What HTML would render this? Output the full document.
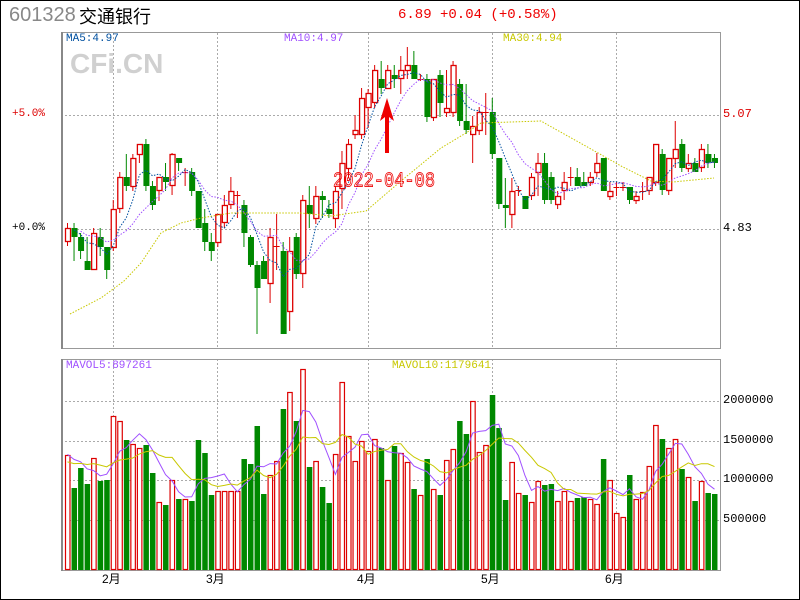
<!DOCTYPE html>
<html><head><meta charset="utf-8"><style>
html,body{margin:0;padding:0;background:#fff;}
#w{position:relative;width:798px;height:598px;border:1px solid #000;overflow:hidden;font-family:"Liberation Mono",monospace;}
.t{position:absolute;white-space:nowrap;}
</style></head><body><div id="w">
<div class="t" style="left:8px;top:3px;font:20px 'Liberation Sans',sans-serif;color:#888;">601328</div>
<div class="t" style="left:78px;top:3px;font:18px 'Noto Sans CJK SC',sans-serif;color:#000;line-height:24px;">交通银行</div>
<div class="t" style="left:397px;top:6px;font:14px 'Liberation Mono',monospace;color:#e00;">6.89 +0.04 (+0.58%)</div>
<svg id="s" width="798" height="598" style="position:absolute;left:0;top:0" xmlns="http://www.w3.org/2000/svg"></svg>
</div>
<script>
var C=[['r',227,240,222,245],['g',227,236,222,260],['g',236,250,232,258],['g',260,269,236,269],['r',232,268,227,268],['g',236,246,227,255],['g',246,269,246,278],['r',208,246,199,250],['r',176,207,171,212],['g',176,185,153,190],
['r',157,185,153,190],['r',143,153,143,162],['g',143,185,138,190],['g',185,204,180,209],['r',176,189,176,200],['g',176,181,162,190],['r',153,184,152,194],['g',157,162,157,170],['r',171,172,167,185],['g',171,190,167,195],
['g',190,227,190,227],['g',222,241,208,250],['g',241,250,232,260],['r',213,241,213,246],['r',204,221,194,227],['r',190,203,176,208],['r',194,195,190,217],['g',204,232,199,246],['g',236,264,234,266],['g',264,287,260,333],
['g',260,278,255,278],['r',236,282,227,302],['r',245,246,213,269],['g',250,333,241,333],['r',250,310,236,330],['g',236,273,232,278],['r',199,272,194,287],['g',204,213,185,227],['r',195,217,185,223],['g',195,199,190,217],
['g',208,213,199,217],['r',190,217,185,227],['r',162,187,150,208],['r',143,167,138,177],['r',129,133,114,138],['r',97,133,87,138],['r',92,106,88,127],['r',69,101,64,107],['g',78,87,60,93],['r',69,87,64,87],
['g',74,78,64,87],['r',69,77,55,93],['r',64,69,46,78],['g',64,78,50,78],['r',78,79,73,80],['g',78,116,73,121],['r',78,116,78,120],['g',74,102,69,116],['r',107,111,69,116],['r',64,111,60,116],
['g',83,120,78,125],['g',120,129,83,133],['r',125,133,115,162],['r',111,129,106,134],['r',111,112,92,134],['g',111,153,97,158],['g',157,203,157,208],['g',204,207,177,227],['r',190,213,177,227],['r',189,190,185,195],
['g',195,208,195,208],['r',176,194,172,199],['r',162,171,152,195],['g',162,199,152,203],['g',176,199,171,203],['r',195,203,190,208],['r',181,189,171,199],['r',176,177,166,185],['g',176,185,167,185],['g',181,185,171,185],
['r',176,181,171,185],['r',162,171,152,176],['g',157,190,157,190],['r',190,195,181,199],['r',186,187,181,195],['r',186,187,181,190],['g',186,199,186,203],['r',195,199,190,203],['r',190,191,181,199],['r',176,189,176,194],
['r',143,181,143,185],['g',153,189,148,194],['r',157,189,157,194],['r',148,157,120,167],['g',143,167,138,171],['r',162,167,153,171],['g',162,171,157,171],['r',148,166,143,171],['g',153,162,143,167],['g',157,162,153,167]];
var V=[['r',454],['g',487],['g',467],['g',483],['r',457],['g',480],['g',479],['r',415],['r',420],['g',439],['r',443],['r',447],['g',444],['g',472],['r',501],['g',504],['r',479],['g',498],['r',498],['g',500],
['g',439],['g',452],['g',494],['r',490],['r',490],['r',490],['r',490],['g',458],['g',463],['g',425],['g',493],['r',474],['r',460],['g',408],['r',391],['g',420],['r',368],['g',466],['r',460],['g',486],
['g',502],['r',453],['r',381],['r',435],['r',460],['r',440],['r',450],['r',438],['g',447],['r',479],['g',445],['r',452],
['r',461],['g',488],['r',494],['g',458],['r',488],['g',494],['r',459],['r',448],['g',420],['g',433],['r',400],['r',451],['r',444],['g',394],['g',427],['g',499],['r',461],['r',492],['g',494],['r',501],
['r',480],['g',484],['g',483],['r',500],['r',490],['r',500],['g',497],['g',496],['r',498],['r',503],['g',458],['r',479],['r',512],['r',516],['g',474],['r',498],['r',491],['r',465],['r',424],['g',438],
['r',447],['r',438],['g',468],['r',476],['g',500],['r',480],['g',492],['g',493]];
var s='',X=function(i){return 64+i*6.535;};
function L(x1,y1,x2,y2,c,d,w){return '<line x1="'+x1+'" y1="'+y1+'" x2="'+x2+'" y2="'+y2+'" stroke="'+c+'"'+(d?' stroke-dasharray="'+d+'"':'')+' stroke-width="'+(w||1)+'"/>';}
[112,216,367,491,615].forEach(function(x){s+=L(x+.5,32,x+.5,347,'#aaa','2,2');s+=L(x+.5,358,x+.5,569,'#aaa','2,2');});
s+=L(60,114.5,720,114.5,'#aaa','2,2')+L(60,228.5,720,228.5,'#aaa','2,2');
[400,440,479,519].forEach(function(y){s+=L(60,y+.5,720,y+.5,'#aaa','2,2');});
s+='<rect x="60.5" y="31.5" width="659" height="316" fill="none" stroke="#999"/>';
s+='<rect x="60.5" y="358.5" width="659" height="211" fill="none" stroke="#999"/>';
s+=L(61,31,61,348,'#888',null,2)+L(61,358,61,570,'#888',null,2);
var cl=[];
C.forEach(function(c,i){var x=X(i),cx=x+2.5,col=c[0]=='r'?'#d00':'#080';cl.push(c[0]=='r'?c[1]:c[2]);
s+=L(cx,c[3],cx,c[4],col);
if(c[2]-c[1]<=1)s+=L(x-0.5,c[1]+.5,x+5.5,c[1]+.5,col);
else if(c[0]=='r')s+='<rect x="'+(x+.5)+'" y="'+(c[1]+.5)+'" width="5" height="'+(c[2]-c[1])+'" fill="#fff" stroke="'+col+'" stroke-width="1.3"/>';
else s+='<rect x="'+x+'" y="'+c[1]+'" width="6" height="'+(c[2]-c[1])+'" fill="'+col+'"/>';});
function ma(a,n){var r=[];for(var i=0;i<a.length;i++){var t=0;for(var k=0;k<n;k++)t+=a[Math.max(0,i-k)];r.push(t/n);}return r;}
function pl(a,c,d,st){var p=a.map(function(v,i){return (X(i+st)+2.5).toFixed(1)+','+v.toFixed(1);}).join(' ');return '<polyline points="'+p+'" fill="none" stroke="'+c+'"'+(d?' stroke-dasharray="'+d+'"':'')+'/>';}
var m5=ma(cl,5),m10=ma(cl,10);
s+=pl(m5.slice(1),'#0050a0','1.5,1.5',1)+pl(m10.slice(2),'#a050ff','1.5,1.5',2);
s+='<polyline points="69,313 100,297 123,280 140,262 160,232 180,222 200,217 230,212 300,212 330,215 365,210 400,180 440,147 465,132 480,122 540,120 547,124 590,148 620,165 650,180 672,181 713,177" fill="none" stroke="#c8c800" stroke-dasharray="1.5,1.5"/>';
var vv=[];
V.forEach(function(v,i){var x=X(i),col=v[0]=='r'?'#d00':'#080';vv.push(v[1]);
if(v[0]=='r')s+='<rect x="'+(x+.5)+'" y="'+(v[1]+.5)+'" width="4.5" height="'+(568-v[1])+'" fill="#fff" stroke="'+col+'" stroke-width="1.2"/>';
else s+='<rect x="'+x+'" y="'+v[1]+'" width="5.5" height="'+(569-v[1])+'" fill="'+col+'"/>';});
var bs=[457,470,469,472,466,465,462,455,448,448];
var ext=bs.concat(vv);
s+=pl(ma(ext,5).slice(10),'#a050ff',null,0)+pl(ma(ext,10).slice(10),'#c8c800',null,0);
s+='<path d="M386,97 L379,120 L384,116 L384,152 L388,152 L388,116 L393,120 Z" fill="#e00"/>';
document.getElementById('s').innerHTML=s;
</script>
<div class="t" style="left:66px;top:33px;font:11px 'Liberation Mono',monospace;color:#0050a0;">MA5:4.97</div>
<div class="t" style="left:284px;top:33px;font:11px 'Liberation Mono',monospace;color:#a050ff;">MA10:4.97</div>
<div class="t" style="left:503px;top:33px;font:11px 'Liberation Mono',monospace;color:#c8c800;">MA30:4.94</div>
<div class="t" style="left:70px;top:48px;font:bold 28px 'Liberation Sans',sans-serif;color:#d0d0d0;">CFi.CN</div>
<div class="t" style="left:12px;top:108px;font:11px 'Liberation Mono',monospace;color:#d00;">+5.0%</div>
<div class="t" style="left:12px;top:222px;font:11px 'Liberation Mono',monospace;color:#000;">+0.0%</div>
<div class="t" style="left:723px;top:107px;font:12px 'Liberation Mono',monospace;color:#d00;">5.07</div>
<div class="t" style="left:723px;top:221px;font:12px 'Liberation Mono',monospace;color:#000;">4.83</div>
<div class="t" style="left:333px;top:170px;font:17px 'Liberation Mono',monospace;color:transparent;-webkit-text-stroke:0.7px #e00;transform:scaleY(1.25);transform-origin:0 0;">2022-04-08</div>
<div class="t" style="left:66px;top:360px;font:11px 'Liberation Mono',monospace;color:#a050ff;">MAVOL5:897261</div>
<div class="t" style="left:392px;top:360px;font:11px 'Liberation Mono',monospace;color:#c8c800;">MAVOL10:1179641</div>
<div class="t" style="left:723px;top:393px;font:12px 'Liberation Mono',monospace;">2000000</div>
<div class="t" style="left:723px;top:433px;font:12px 'Liberation Mono',monospace;">1500000</div>
<div class="t" style="left:723px;top:472px;font:12px 'Liberation Mono',monospace;">1000000</div>
<div class="t" style="left:723px;top:512px;font:12px 'Liberation Mono',monospace;">500000</div>
<div class="t" style="left:102px;top:570px;font:12px 'Liberation Sans','Noto Sans CJK SC',sans-serif;">2月</div>
<div class="t" style="left:206px;top:570px;font:12px 'Liberation Sans','Noto Sans CJK SC',sans-serif;">3月</div>
<div class="t" style="left:357px;top:570px;font:12px 'Liberation Sans','Noto Sans CJK SC',sans-serif;">4月</div>
<div class="t" style="left:481px;top:570px;font:12px 'Liberation Sans','Noto Sans CJK SC',sans-serif;">5月</div>
<div class="t" style="left:605px;top:570px;font:12px 'Liberation Sans','Noto Sans CJK SC',sans-serif;">6月</div>
</body></html>
